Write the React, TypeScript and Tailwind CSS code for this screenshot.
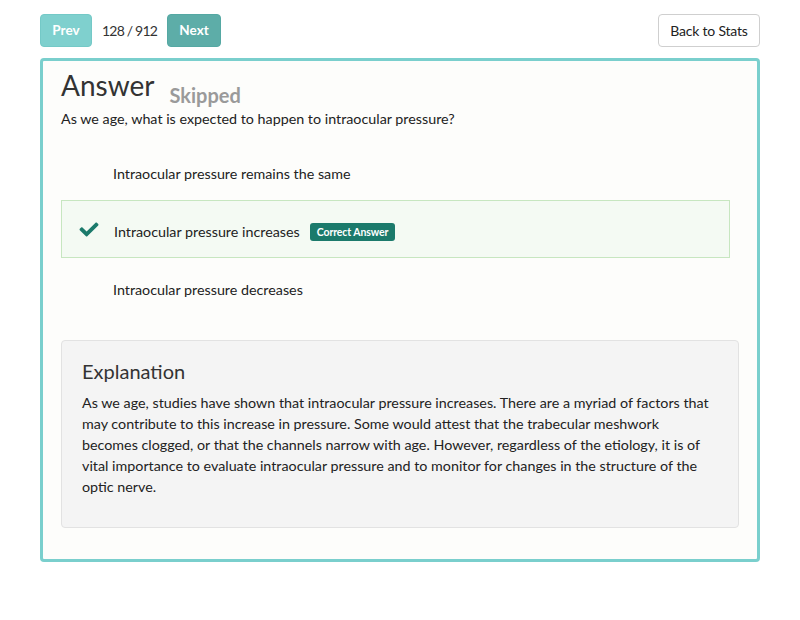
import React from "react";
import { FaCheck } from "react-icons/fa";

const options = [
  { text: "Intraocular pressure remains the same", correct: false },
  { text: "Intraocular pressure increases", correct: true },
  { text: "Intraocular pressure decreases", correct: false },
];

export default function App() {
  return (
    <div className="min-h-[620px] bg-white text-[#333] font-['Lato','Open_Sans',sans-serif]">
      <div className="mx-auto w-[720px] pt-[14px]">
        <div className="flex items-center justify-between">
          <div className="flex items-center">
            <button className="h-[33px] w-[52px] rounded-[4px] border border-[#74c9c7] bg-[#7fd0ce] text-[13.5px] font-bold text-white">
              Prev
            </button>
            <span className="ml-[10px] mr-[10px] text-[14px] tracking-[-0.8px] text-[#333]">128 / 912</span>
            <button className="h-[33px] w-[54px] rounded-[4px] border border-[#55a8a3] bg-[#5dada8] text-[13.5px] font-bold text-white">
              Next
            </button>
          </div>
          <button className="h-[33px] w-[102px] rounded-[4px] border border-[#cfcfcf] bg-white text-[14px] tracking-[-0.2px] text-[#222]">
            Back to Stats
          </button>
        </div>

        <div className="mt-[11px] rounded-[4px] border-[3px] border-[#7acfcd] bg-[#fdfdfb] px-[18px] pb-[31px] pt-[6px]">
          <div className="flex items-end">
            <h1 className="text-[28px] leading-[36px] text-[#333]">Answer</h1>
            <span className="ml-[15px] mb-[-6px] text-[20px] font-bold leading-[28px] text-[#9a9a9a]">Skipped</span>
          </div>
          <p className="mt-[6px] text-[14.3px] leading-[20px] text-[#222]">
            As we age, what is expected to happen to intraocular pressure?
          </p>

          <div className="mt-[13px] mr-[9px] flex flex-col">
            {options.map((o) => (
              <div
                key={o.text}
                className={
                  o.correct
                    ? "flex h-[58px] items-center border border-[#c7e6c0] bg-[#f4faf3] pl-[16px] pt-[6px]"
                    : "flex h-[58px] items-center border border-transparent pl-[16px] pt-[6px]"
                }
              >
                <span className="flex w-[22px] justify-center">
                  {o.correct ? <FaCheck className="mt-[-6px] h-[19px] w-[22px] text-[#1b7a6b]" /> : null}
                </span>
                <span className={o.correct ? "ml-[14px] text-[14.3px] text-[#222]" : "ml-[13px] text-[14.3px] text-[#222]"}>
                  {o.text}
                </span>
                {o.correct ? (
                  <span className="ml-[10px] rounded-[3px] bg-[#1b7a6b] px-[7px] py-[2px] text-[10.5px] font-bold leading-[14px] tracking-[-0.1px] text-white">
                    Correct Answer
                  </span>
                ) : null}
              </div>
            ))}
          </div>

          <div className="mt-[24px] rounded-[4px] border border-[#e2e2e2] bg-[#f4f4f4] px-[20px] pb-[30px] pt-[16px]">
            <h2 className="text-[20px] leading-[28px] text-[#333]">Explanation</h2>
            <p className="mt-[7px] text-[14.3px] leading-[21px] text-[#222]">
              As we age, studies have shown that intraocular pressure increases. There are a myriad of factors that may
              contribute to this increase in pressure. Some would attest that the trabecular meshwork becomes clogged, or
              that the channels narrow with age. However, regardless of the etiology, it is of vital importance to
              evaluate intraocular pressure and to monitor for changes in the structure of the optic nerve.
            </p>
          </div>
        </div>
      </div>
    </div>
  );
}
